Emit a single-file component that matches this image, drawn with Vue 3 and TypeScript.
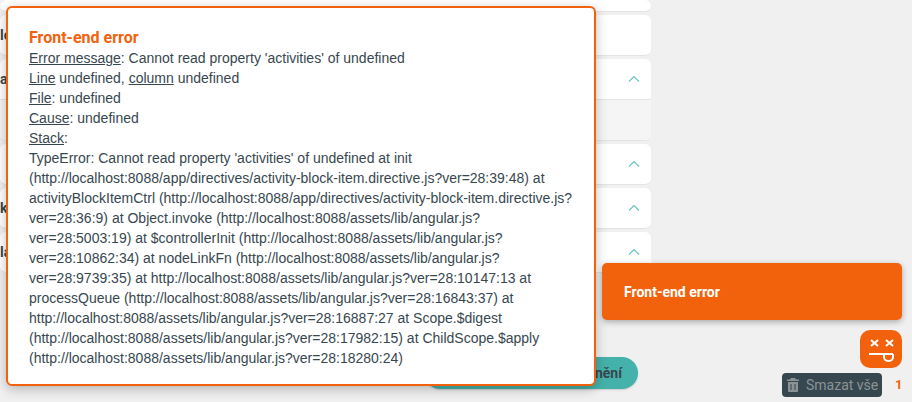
<script setup lang="ts">
const cards = [
  { h: 11, open: false, chevron: false, label: '', mt: 0 },
  { h: 40, open: false, chevron: false, label: 'le', mt: 3 },
  { h: 40, open: true, chevron: true, label: 'al', mt: 3 },
  { h: 40, open: false, chevron: true, label: '', mt: 3 },
  { h: 40, open: false, chevron: true, label: 'k', mt: 3 },
  { h: 40, open: false, chevron: true, label: 'la', mt: 3 },
]
const stack = `TypeError: Cannot read property 'activities' of undefined at init (http://localhost:8088/app/directives/activity-block-item.directive.js?ver=28:39:48) at activityBlockItemCtrl (http://localhost:8088/app/directives/activity-block-item.directive.js?ver=28:36:9) at Object.invoke (http://localhost:8088/assets/lib/angular.js?ver=28:5003:19) at $controllerInit (http://localhost:8088/assets/lib/angular.js?ver=28:10862:34) at nodeLinkFn (http://localhost:8088/assets/lib/angular.js?ver=28:9739:35) at http://localhost:8088/assets/lib/angular.js?ver=28:10147:13 at processQueue (http://localhost:8088/assets/lib/angular.js?ver=28:16843:37) at http://localhost:8088/assets/lib/angular.js?ver=28:16887:27 at Scope.$digest (http://localhost:8088/assets/lib/angular.js?ver=28:17982:15) at ChildScope.$apply (http://localhost:8088/assets/lib/angular.js?ver=28:18280:24)`
</script>

<template>
  <div class="page">
    <div class="list">
      <div v-for="(c, i) in cards" :key="i" class="card" :style="{ marginTop: c.mt + 'px' }">
        <div class="head" :style="{ height: c.h + 'px' }">
          <span class="lbl">{{ c.label }}</span>
          <svg v-if="c.chevron" class="chev" width="12" height="8" viewBox="0 0 12 8">
            <path d="M1 6.5 L6 1.5 L11 6.5" fill="none" stroke="#6cc4bd" stroke-width="1.2" />
          </svg>
        </div>
        <div v-if="c.open" class="body"></div>
      </div>
    </div>
    <div class="save"><span>nění</span></div>

    <div class="modal">
      <h3>Front-end error</h3>
      <div><u>Error message</u>: Cannot read property 'activities' of undefined</div>
      <div><u>Line</u> undefined, <u>column</u> undefined</div>
      <div><u>File</u>: undefined</div>
      <div><u>Cause</u>: undefined</div>
      <div><u>Stack</u>:</div>
      <div>{{ stack }}</div>
    </div>

    <div class="toast">Front-end error</div>

    <div class="bug">
      <svg width="42" height="38" viewBox="0 0 42 38">
        <g stroke="#fff" stroke-width="2" fill="none">
          <path d="M11 10 L18 16 M18 10 L11 16" />
          <path d="M26 10 L33 16 M33 10 L26 16" />
          <path d="M9 24 H33" />
          <path d="M24 24 V27 a4 4 0 0 0 4 4 h1 a4 4 0 0 0 4 -4 V24" />
        </g>
      </svg>
    </div>
    <div class="clear">
      <svg width="12" height="14" viewBox="0 0 12 14">
        <path fill="#8b9396" d="M4 0h4l1 1.5h3V3H0V1.500h3zM1 4h10v9a1 1 0 0 1-1 1H2a1 1 0 0 1-1-1zM3.500 6v6h1V6zM7.500 6v6h1V6z" />
      </svg>
      <span>Smazat vše</span>
    </div>
    <div class="count">1</div>
  </div>
</template>

<style>
html, body { margin: 0; background: #f0f0f0; overflow: hidden; }
</style>

<style scoped>
.page {
  position: relative;
  width: 912px;
  height: 402px;
  overflow: hidden;
  background: #f0f0f0;
  font-family: "Liberation Sans", Arial, sans-serif;
}
.list { width: 651px; }
.card {
  background: #fff;
  border-radius: 0 0 6px 6px;
  border-bottom: 1px solid #e4e4e4;
  border-radius: 6px;
  overflow: hidden;
}
.head {
  display: flex;
  align-items: center;
  justify-content: space-between;
  padding-right: 11px;
}
.lbl {
  font: 700 14px Roboto, sans-serif;
  color: #37474f;
}
.chev { display: block; }
.body { height: 40px; background: #f5f5f5; border-top: 1px solid #e4e4e4; }
.save {
  position: absolute;
  left: 424px;
  top: 357px;
  width: 214px;
  height: 32px;
  border-radius: 16px;
  background: #45b1ab;
  box-shadow: 0 1px 2px rgba(0,0,0,.15);
  display: flex;
  align-items: center;
  justify-content: flex-end;
  padding-right: 16px;
  box-sizing: border-box;
  font: 700 14px Roboto, sans-serif;
  color: #37474f;
}
.modal {
  position: absolute;
  left: 6px;
  top: 6px;
  width: 590px;
  height: 380px;
  box-sizing: border-box;
  padding: 20px 20px 0 21px;
  border: 2px solid #f2620d;
  border-radius: 6px;
  background: #fff;
  box-shadow: 0 3px 12px rgba(0,0,0,.25);
  font-size: 14px;
  line-height: 20px;
  color: #37474f;
}
.modal h3 {
  margin: 0;
  font: 700 16px/20px Roboto, sans-serif;
  color: #f2620d;
}
.toast {
  position: absolute;
  left: 602px;
  top: 263px;
  width: 300px;
  height: 57px;
  box-sizing: border-box;
  padding-left: 22px;
  display: flex;
  align-items: center;
  border-radius: 5px;
  background: #f2620d;
  box-shadow: 0 2px 6px rgba(0,0,0,.3);
  color: #fff;
  font: 700 14px Roboto, sans-serif;
}
.bug {
  position: absolute;
  left: 860px;
  top: 330px;
  width: 42px;
  height: 38px;
  border-radius: 10px;
  background: #f2620d;
}
.bug svg { display: block; }
.clear {
  position: absolute;
  left: 782px;
  top: 373px;
  width: 100px;
  height: 24px;
  box-sizing: border-box;
  border-radius: 4px;
  background: #37474f;
  display: flex;
  align-items: center;
  gap: 7px;
  padding-left: 5px;
  color: #8b9396;
  font: 400 14px Roboto, sans-serif;
}
.count {
  position: absolute;
  left: 895px;
  top: 377px;
  color: #f2620d;
  font: 700 13px/16px Roboto, sans-serif;
}
</style>
